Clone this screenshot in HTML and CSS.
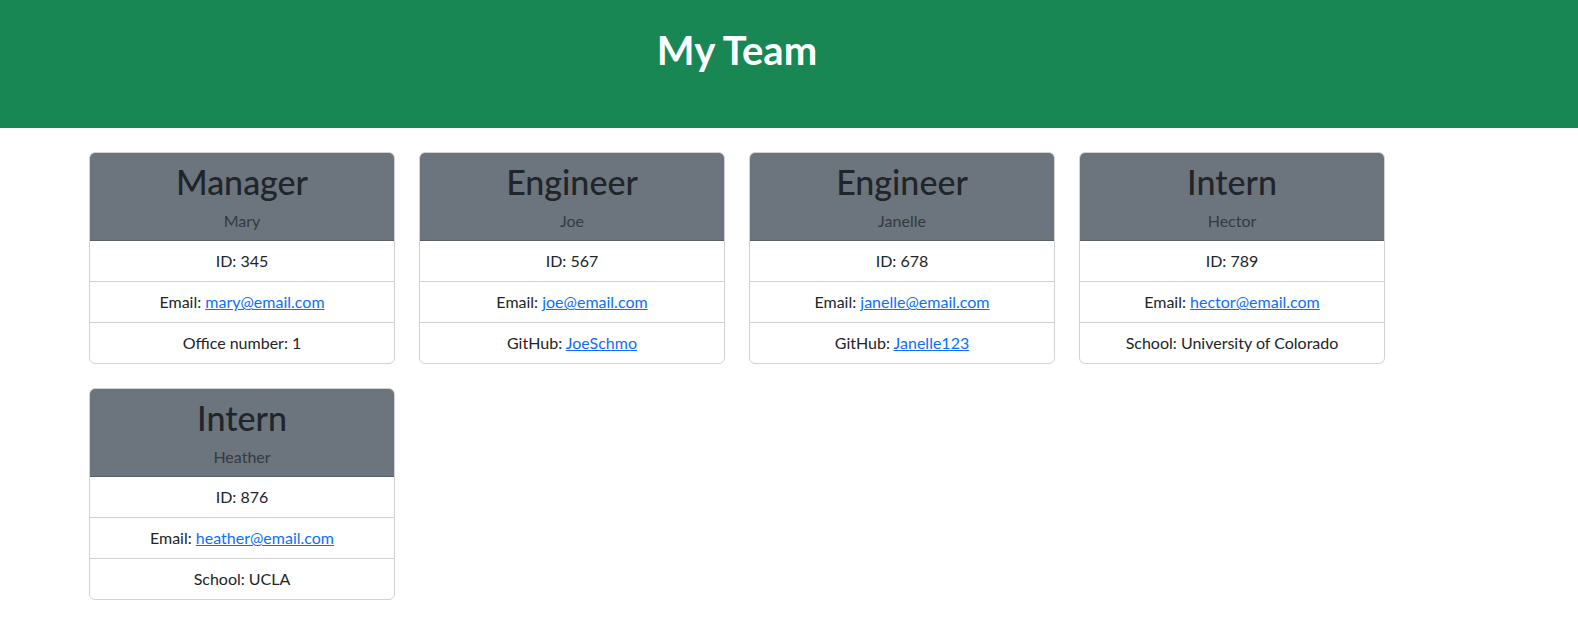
FILE: index.html
```html
<!DOCTYPE html>
<html lang="en">
<head>
<meta charset="utf-8">
<title>My Team</title>
<link rel="stylesheet" href="styles.css">
</head>
<body>
<header class="hero">
  <h1 class="hero-title">My Team</h1>
</header>
<main class="team">
  <div class="card">
    <div class="card-header">
      <h2 class="card-title">Manager</h2>
      <div class="card-subtitle">Mary</div>
    </div>
    <ul class="list">
      <li class="item">ID: 345</li>
      <li class="item">Email: <a href="#">mary@email.com</a></li>
      <li class="item">Office number: 1</li>
    </ul>
  </div>
  <div class="card">
    <div class="card-header">
      <h2 class="card-title">Engineer</h2>
      <div class="card-subtitle">Joe</div>
    </div>
    <ul class="list">
      <li class="item">ID: 567</li>
      <li class="item">Email: <a href="#">joe@email.com</a></li>
      <li class="item">GitHub: <a href="#">JoeSchmo</a></li>
    </ul>
  </div>
  <div class="card">
    <div class="card-header">
      <h2 class="card-title">Engineer</h2>
      <div class="card-subtitle">Janelle</div>
    </div>
    <ul class="list">
      <li class="item">ID: 678</li>
      <li class="item">Email: <a href="#">janelle@email.com</a></li>
      <li class="item">GitHub: <a href="#">Janelle123</a></li>
    </ul>
  </div>
  <div class="card">
    <div class="card-header">
      <h2 class="card-title">Intern</h2>
      <div class="card-subtitle">Hector</div>
    </div>
    <ul class="list">
      <li class="item">ID: 789</li>
      <li class="item">Email: <a href="#">hector@email.com</a></li>
      <li class="item">School: University of Colorado</li>
    </ul>
  </div>
  <div class="card">
    <div class="card-header">
      <h2 class="card-title">Intern</h2>
      <div class="card-subtitle">Heather</div>
    </div>
    <ul class="list">
      <li class="item">ID: 876</li>
      <li class="item">Email: <a href="#">heather@email.com</a></li>
      <li class="item">School: UCLA</li>
    </ul>
  </div>
</main>
</body>
</html>
```
FILE: styles.css
```css
* { box-sizing: border-box; }
body {
  margin: 0;
  font-family: Lato, "Noto Sans", sans-serif;
  font-size: 16px;
  line-height: 1.5;
  color: #212529;
  background: #fff;
}
.hero {
  background: #198754;
  height: 128px;
  padding: 26px 104px 0 0;
  text-align: center;
}
.hero-title {
  margin: 0;
  font-size: 40px;
  line-height: 48px;
  font-weight: 700;
  color: #fff;
}
.team {
  margin: 24px 0 0 89px;
  display: grid;
  grid-template-columns: repeat(4, 306px);
  gap: 24px;
  align-items: start;
}
.card {
  border: 1px solid rgba(0,0,0,.175);
  border-radius: 6px;
  overflow: hidden;
}
.card-header {
  background: #6c757d;
  text-align: center;
  padding: 9px 16px 7px;
  border-bottom: 1px solid rgba(0,0,0,.175);
}
.card-title {
  margin: 0 0 7px;
  font-size: 34px;
  line-height: 40px;
  font-weight: 500;
  color: #212529;
}
.card-subtitle {
  font-size: 16px;
  line-height: 24px;
  color: #343a40;
}
.list {
  list-style: none;
  margin: 0;
  padding: 0;
}
.item {
  padding: 8px 16px;
  text-align: center;
  line-height: 24px;
  border-top: 1px solid rgba(0,0,0,.175);
}
.item:first-child { border-top: 0; }
.item a { color: #0d6efd; text-decoration: underline; }
```
